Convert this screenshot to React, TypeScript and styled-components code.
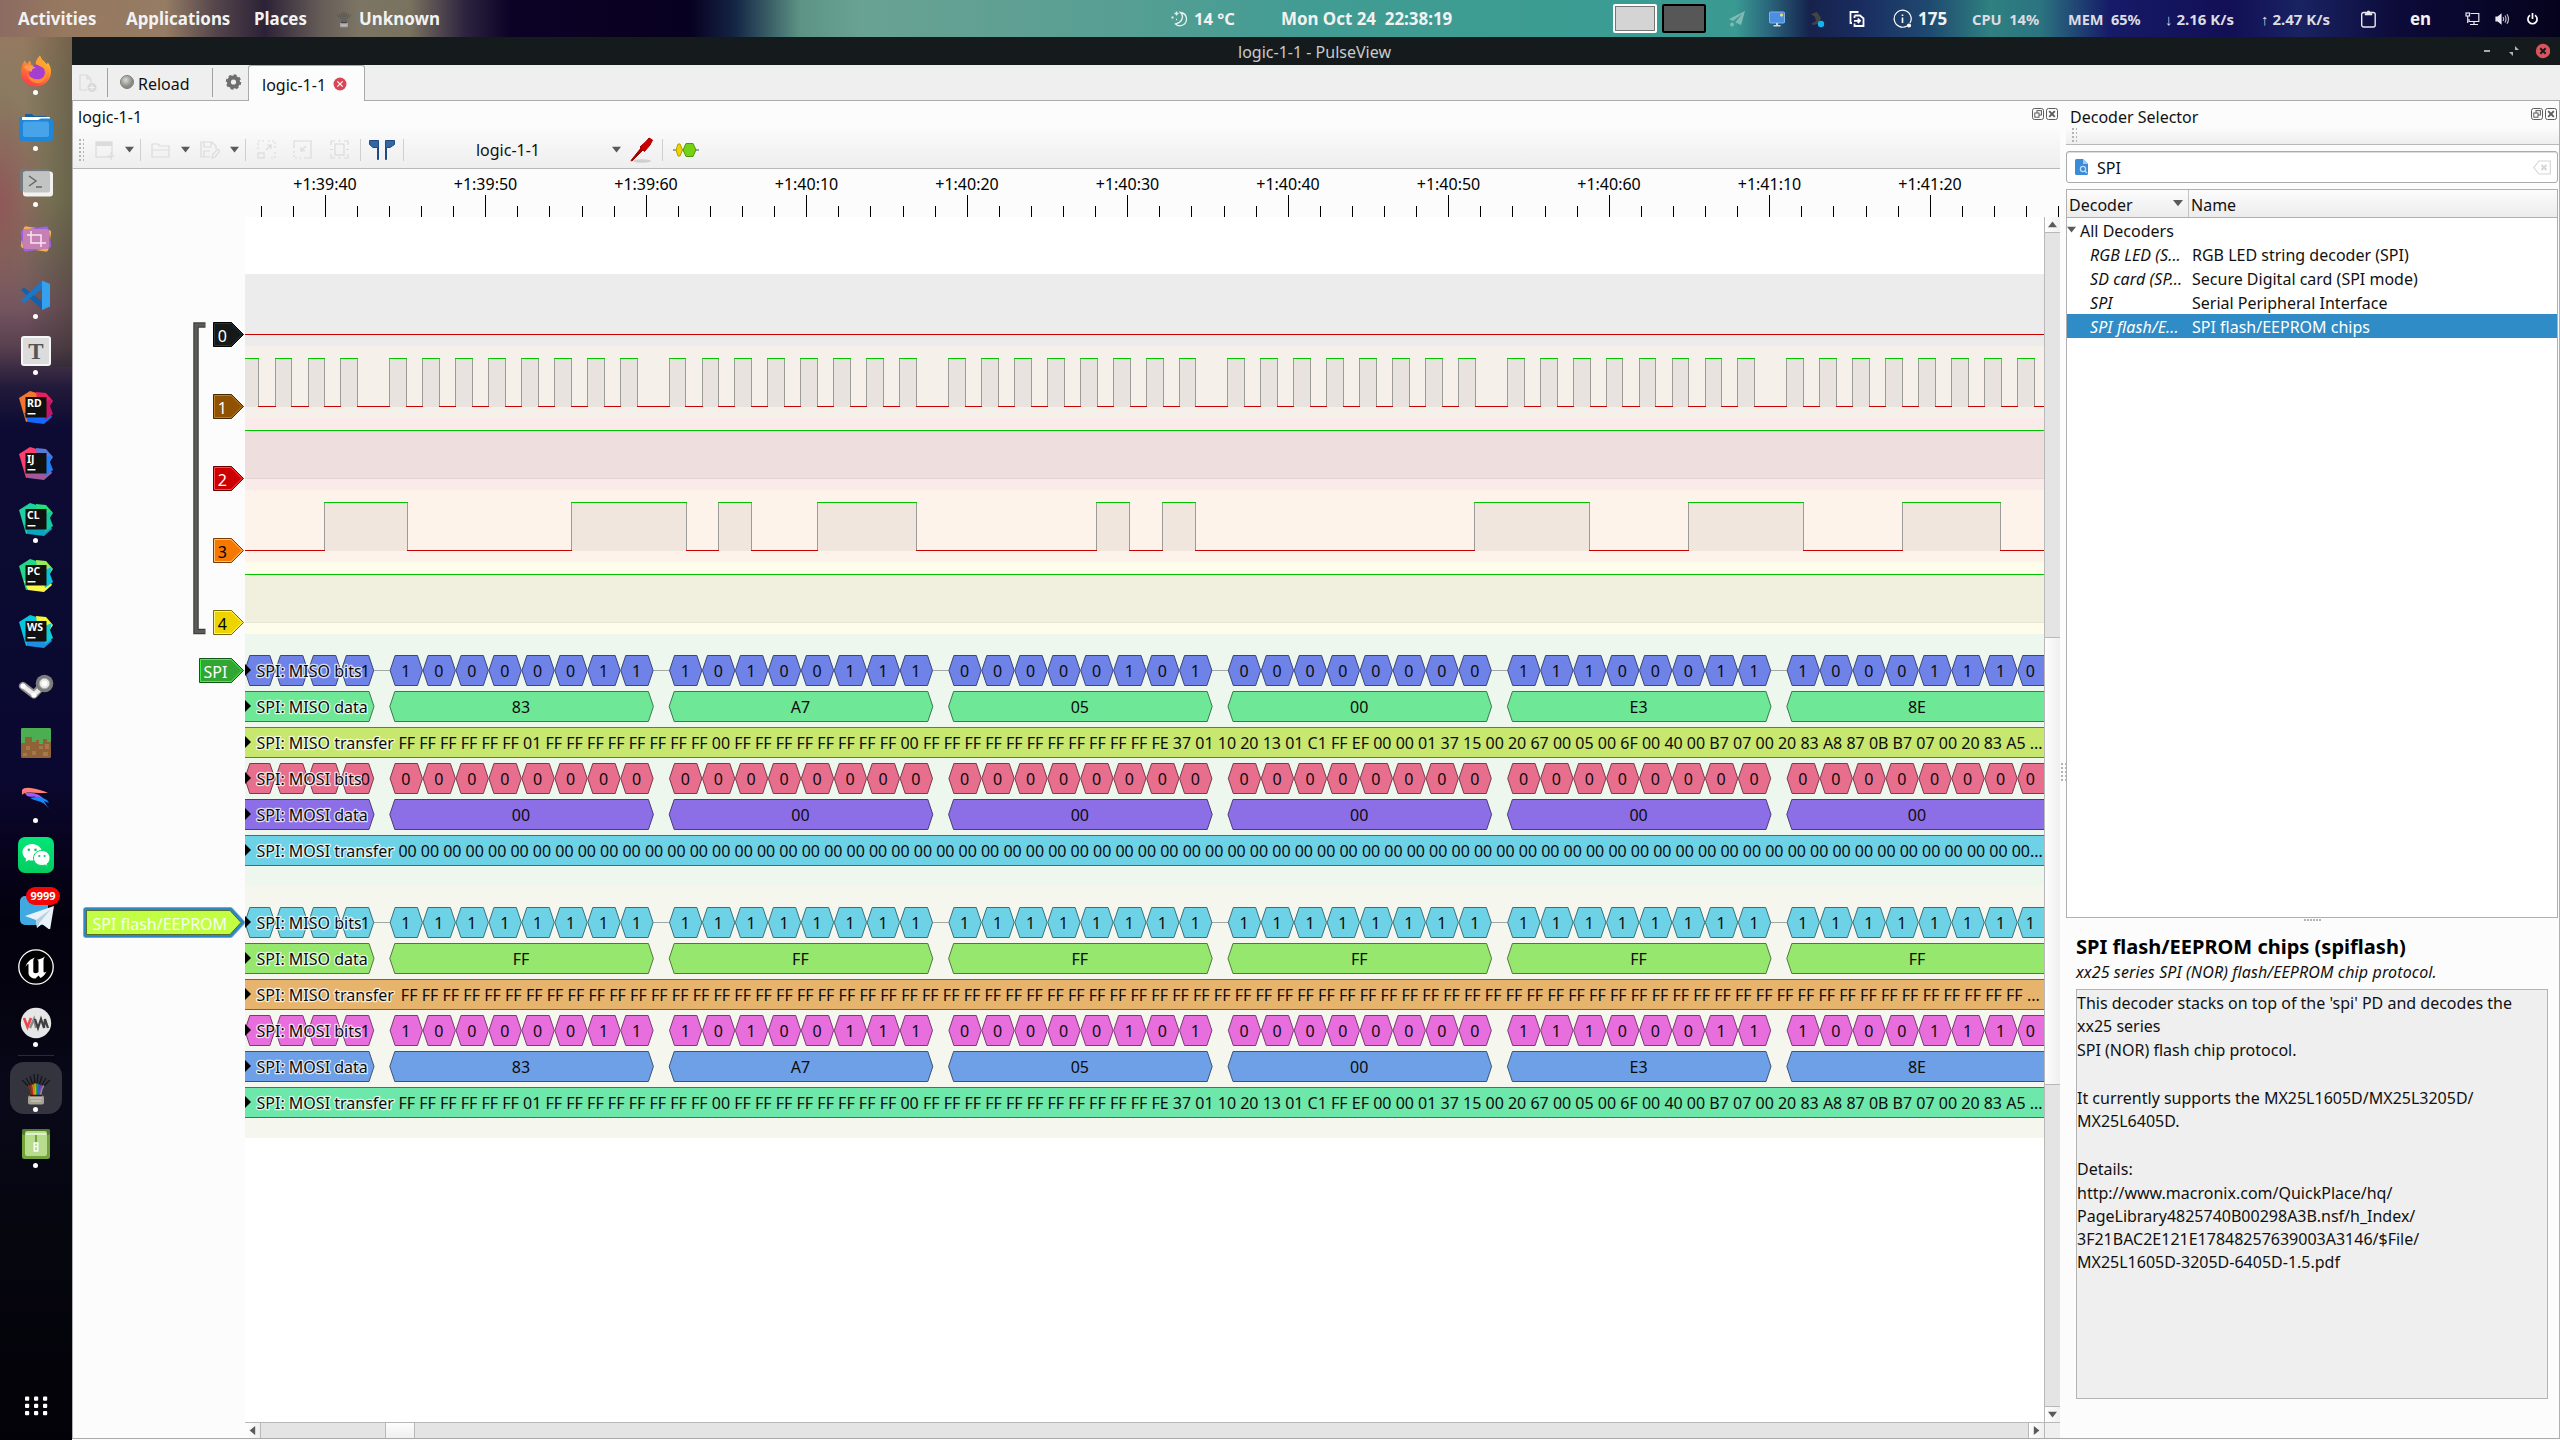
import React from "react";
import styled, { createGlobalStyle } from "styled-components";

const FONT = '"Noto Sans", "Open Sans", sans-serif';

const Global = createGlobalStyle`
  * { box-sizing: border-box; }
  body { margin: 0; background: #05031a; overflow: hidden; }
  #root { font-family: ${FONT}; font-size: 16px; color: #111; }
  svg { display: block; flex: none; }
`;

/* ---------- desktop shell ---------- */

const Desktop = styled.div`
  width: 2560px;
  height: 1440px;
  display: flex;
  flex-direction: column;
  overflow: hidden;
`;

const TopBar = styled.header`
  height: 37px;
  flex: none;
  display: flex;
  align-items: center;
  color: #f2f2f2;
  font-weight: 700;
  white-space: pre;
  background: linear-gradient(
    90deg,
    #8c6b62 0px, #96785f 60px, #957c64 165px, #55464c 215px, #2c2237 265px, #655c58 320px,
    #7d7564 360px, #79725f 410px, #2d2440 465px, #0c0226 510px, #080020 690px, #142545 735px,
    #5c9384 800px, #69a293 860px, #599f93 1100px, #429c93 1300px, #3a9c92 1600px, #3a9a92 1735px,
    #2c6c80 1765px, #16224c 1810px, #192c60 1860px, #1f4a70 1930px, #2f8080 1990px, #2b7480 2040px,
    #161a68 2110px, #120f55 2230px, #192362 2300px, #0c0a38 2400px, #05031c 2560px
  );
`;

const Cell = styled.div<{ $w: number; $ml?: number; $size?: number; $dim?: boolean; $gap?: number }>`
  width: ${(p) => p.$w}px;
  margin-left: ${(p) => p.$ml ?? 0}px;
  font-size: ${(p) => p.$size ?? 16.9}px;
  color: ${(p) => (p.$dim ? "#dcdce4" : "#f2f2f2")};
  gap: ${(p) => p.$gap ?? 0}px;
  flex: none;
  display: flex;
  align-items: center;
  height: 37px;
`;

const Workspace = styled.div<{ $active?: boolean }>`
  width: 44px;
  height: 29px;
  flex: none;
  border: 2px solid ${(p) => (p.$active ? "#fff" : "#000")};
  border-radius: 2px;
  background: ${(p) => (p.$active ? "#d4d4d4" : "#575757")};
  box-shadow: inset 0 0 0 1px ${(p) => (p.$active ? "#777" : "#575757")};
`;

const Body = styled.div`
  flex: 1;
  display: flex;
  min-height: 0;
`;

const Dock = styled.nav`
  width: 72px;
  flex: none;
  display: flex;
  flex-direction: column;
  align-items: center;
  padding-top: 6px;
  background:
    linear-gradient(90deg, rgba(0, 0, 0, 0) 35%, rgba(30, 40, 20, 0.28) 100%) 0 0 / 100% 330px no-repeat,
    radial-gradient(ellipse 50px 110px at 0 165px, rgba(146, 80, 88, 0.85), rgba(146, 80, 88, 0) 100%),
    linear-gradient(
      180deg,
      #94795f 0, #8a7b62 60px, #857c5e 160px, #7b6c5c 210px, #745560 270px, #58404e 310px,
      #221a3a 350px, #0d0b33 390px, #0b0a31 560px, #0a0830 740px, #080420 800px, #04010f 880px,
      #05030f 960px, #080819 1050px, #06060f 1200px, #030208 1403px
    );
`;

const DockItem = styled.div<{ $h?: number }>`
  position: relative;
  width: 52px;
  height: ${(p) => p.$h ?? 56}px;
  flex: none;
  display: flex;
  align-items: center;
  justify-content: center;
`;

const Dot = styled.span<{ $bottom?: number }>`
  position: absolute;
  left: 23px;
  bottom: ${(p) => p.$bottom ?? 4}px;
  width: 5px;
  height: 5px;
  border-radius: 2.5px;
  background: #fff;
`;

const Badge = styled.span`
  position: absolute;
  left: 16px;
  top: 4px;
  width: 34px;
  height: 18px;
  border-radius: 9px;
  background: #f60505;
  color: #fff;
  font-size: 11px;
  font-weight: 700;
  line-height: 18px;
  text-align: center;
`;

const DockRule = styled.div`
  width: 36px;
  height: 1px;
  margin: 4px 0 6px;
  background: #2a2a38;
`;

const ActiveTile = styled.div`
  position: relative;
  width: 52px;
  height: 52px;
  flex: none;
  border-radius: 14px;
  background: #34343f;
  display: flex;
  align-items: center;
  justify-content: center;
`;

const Spring = styled.div`
  flex: 1;
`;

/* ---------- application window ---------- */

const Window = styled.main`
  flex: 1;
  display: flex;
  flex-direction: column;
  background: #fcfcfc;
  min-width: 0;
`;

const TitleBar = styled.div`
  height: 28px;
  flex: none;
  background: #151b1d;
  color: #c9cbcb;
  display: grid;
  grid-template-columns: 1fr auto 1fr;
  align-items: center;
  padding-right: 10px;
`;

const TitleText = styled.span`
  padding: 2px 0 0 7px;
`;

const WinButtons = styled.div`
  display: flex;
  justify-content: flex-end;
`;

const TabStrip = styled.div`
  height: 36px;
  flex: none;
  background: #efefef;
  display: flex;
  box-shadow: inset 0 -1px 0 #ababab;
`;

const StripCell = styled.div<{ $w: number; $pl?: number; $sep?: boolean }>`
  width: ${(p) => p.$w}px;
  padding-left: ${(p) => p.$pl ?? 0}px;
  display: flex;
  align-items: center;
  height: 35px;
  flex: none;
  background: ${(p) =>
    p.$sep ? "linear-gradient(#a0a0a0, #a0a0a0) right 3px / 1px 29px no-repeat" : "none"};
`;

const StripLabel = styled.span`
  padding: 3px 0 0 4px;
`;

const Tab = styled.div`
  width: 117px;
  height: 36px;
  display: flex;
  align-items: center;
  justify-content: space-between;
  padding: 3px 17px 0 13px;
  white-space: nowrap;
  border: 1px solid #ababab;
  border-bottom: 0;
  border-radius: 3px 3px 0 0;
  background: #fcfcfc;
`;

const TabClose = styled.span`
  margin-top: -3px;
`;

const Panes = styled.div`
  flex: 1;
  display: flex;
  min-height: 0;
  border-left: 1px solid #b0b0b0;
  border-right: 1px solid #b0b0b0;
  border-bottom: 1px solid #ababab;
  margin-bottom: 1px;
`;

const TracePane = styled.section`
  width: 1987px;
  flex: none;
  display: flex;
  flex-direction: column;
`;

const PaneTitle = styled.div<{ $pl: number }>`
  height: 27px;
  flex: none;
  display: flex;
  align-items: center;
  justify-content: space-between;
  padding: 4px 2px 0 ${(p) => p.$pl}px;
`;

const PaneButtons = styled.div`
  display: flex;
  gap: 2px;
  margin-top: -5px;
`;

const Toolbar = styled.div<{ $h: number; $pt?: number }>`
  height: ${(p) => p.$h}px;
  flex: none;
  display: flex;
  align-items: center;
  padding: ${(p) => p.$pt ?? 0}px 0 0 6px;
  background: linear-gradient(#fbfbfb, #eeeeee);
  border-bottom: 1px solid #b8b8b8;
`;

const Grip = styled.div<{ $h: number }>`
  width: 5px;
  height: ${(p) => p.$h}px;
  flex: none;
  background-image: radial-gradient(circle at 1px 1px, #b4b4b4 0.8px, transparent 1px);
  background-size: 4px 4px;
`;

const Tool = styled.div<{ $w: number; $sep?: boolean; $start?: boolean }>`
  width: ${(p) => p.$w}px;
  height: 22px;
  flex: none;
  display: flex;
  align-items: center;
  justify-content: ${(p) => (p.$start ? "flex-start" : "center")};
  border-right: ${(p) => (p.$sep ? "1px solid #cfcfcf" : "0")};
`;

const ViewRow = styled.div`
  flex: 1;
  display: flex;
  min-height: 0;
`;

const ViewColumn = styled.div`
  width: 1971px;
  display: flex;
  flex-direction: column;
`;

const CanvasRow = styled.div`
  height: 1205px;
  display: flex;
`;

const HScroll = styled.div`
  height: 16px;
  margin-left: 172px;
  border-top: 1px solid #b8b8b8;
  display: flex;
  background: #e4e4e4;
`;

const VScroll = styled.div`
  width: 16px;
  flex: none;
  border-left: 1px solid #b8b8b8;
  display: flex;
  flex-direction: column;
  background: #e4e4e4;
`;

const ScrollButton = styled.div<{ $side: "top" | "bottom" | "left" | "right" }>`
  width: ${(p) => (p.$side === "left" || p.$side === "right" ? 16 : 15)}px;
  height: ${(p) => (p.$side === "left" || p.$side === "right" ? 15 : 16)}px;
  flex: none;
  background: linear-gradient(90deg, #fefefe, #f0f0f0);
  display: flex;
  align-items: center;
  justify-content: center;
  border-${(p) => ({ top: "bottom", bottom: "top", left: "right", right: "left" })[p.$side]}: 1px solid #b8b8b8;
`;

const VThumb = styled.div`
  height: 448px;
  margin-top: 404px;
  border: solid #b8b8b8;
  border-width: 1px 0;
  background: linear-gradient(90deg, #fdfdfd, #efefef);
`;

const HThumb = styled.div`
  width: 30px;
  margin-left: 124px;
  border: solid #b8b8b8;
  border-width: 0 1px;
  background: linear-gradient(#fdfdfd, #efefef);
`;

const Corner = styled.div`
  height: 16px;
  border-top: 1px solid #b8b8b8;
  background: #efefef;
`;

/* ---------- decoder selector ---------- */

const Splitter = styled.div`
  width: 6px;
  flex: none;
  display: flex;
  align-items: center;
  justify-content: center;
  padding-top: 4px;
`;

const SelectorPane = styled.section`
  width: 493px;
  flex: none;
  display: flex;
  flex-direction: column;
`;

const SearchBox = styled.div`
  margin: 6px 1px 6px 0;
  height: 32px;
  flex: none;
  border: 1px solid #aaa;
  border-radius: 3px;
  background: #fff;
  display: flex;
  align-items: center;
  padding: 0 6px 0 8px;
  box-shadow: inset 0 1px 0 #dcdcdc;
`;

const SearchText = styled.span`
  flex: 1;
  padding: 2px 0 0 8px;
`;

const Tree = styled.div`
  margin-right: 1px;
  height: 729px;
  flex: none;
  border: 1px solid #b0b0b0;
  background: #fff;
  display: flex;
  flex-direction: column;
`;

const TreeHead = styled.div`
  height: 28px;
  flex: none;
  display: flex;
  background: linear-gradient(#fcfcfc, #ececec);
  border-bottom: 1px solid #b0b0b0;
`;

const HeadCell = styled.div<{ $w?: number }>`
  width: ${(p) => (p.$w ? `${p.$w}px` : "auto")};
  padding: 3px 5px 0 2px;
  display: flex;
  justify-content: space-between;
  align-items: center;
  border-right: ${(p) => (p.$w ? "1px solid #c4c4c4" : "0")};
`;

const SortMark = styled.span`
  margin-top: -5px;
`;

const TreeRow = styled.div<{ $selected?: boolean }>`
  height: 24px;
  flex: none;
  display: flex;
  align-items: center;
  padding-top: 2px;
  background: ${(p) => (p.$selected ? "#308cc6" : "transparent")};
  color: ${(p) => (p.$selected ? "#fff" : "#111")};
`;

const DecoderId = styled.span`
  width: 125px;
  padding-left: 23px;
  font-style: italic;
  letter-spacing: 0.1px;
  flex: none;
`;

const Twisty = styled.span`
  width: 13px;
  flex: none;
  margin-top: -4px;
`;

const DotRow = styled.div`
  height: 5px;
  width: 18px;
  align-self: center;
  background-image: radial-gradient(circle at 1px 2px, #b4b4b4 0.8px, transparent 1px);
  background-size: 3px 5px;
`;

const Details = styled.div`
  padding: 10px 11px 0 10px;
  display: flex;
  flex-direction: column;
`;

const Heading = styled.h1`
  margin: 0;
  font-size: 20px;
  line-height: 28px;
  font-weight: 700;
  color: #000;
`;

const Summary = styled.div`
  font-style: italic;
  line-height: 24px;
  letter-spacing: 0.12px;
  margin-top: -1px;
`;

const DocBox = styled.div`
  margin-top: 5px;
  height: 410px;
  border: 1px solid #b4b4b4;
  background: #efefef;
  padding-top: 2px;
`;

const Para = styled.p`
  margin: 0 0 1px;
  min-height: 23px;
  line-height: 23px;
  white-space: pre;
`;

/* ---------- trace geometry ---------- */

const VIEW_X = 245;
const VIEW_Y = 217;
const VIEW_W = 1799;
const VIEW_H = 1205;
const BYTE0 = 110.4;
const BYTE_STEP = 279.4;
const BIT = 32.95;

const MISO = [0x01, 0x83, 0xa7, 0x05, 0x00, 0xe3, 0x8e];
const hex2 = (n: number) => n.toString(16).toUpperCase().padStart(2, "0");
const bitsOf = (n: number) => n.toString(2).padStart(8, "0").split("");
const byteX = (i: number) => BYTE0 + i * BYTE_STEP;

const bands = [
  { y: 274, h: 72, fill: "#ececec" },
  { y: 346, h: 72, fill: "#f5f0ea" },
  { y: 418, h: 72, fill: "#fbeaea" },
  { y: 490, h: 72, fill: "#fef3ea" },
  { y: 562, h: 72, fill: "#fefcea" },
  { y: 634, h: 252, fill: "#edf7ee" },
  { y: 886, h: 252, fill: "#f5f7ee" },
];

const clockPulses: [number, number][] = [];
for (let b = 0; b < 7; b++)
  for (let i = 0; i < 8; i++) {
    const s = byteX(b) + i * BIT;
    if (s + 17 > VIEW_X) clockPulses.push([s, s + 16.8]);
  }

const dataPulses: [number, number][] = [
  [324.9, 407.3],
  [571.3, 686.1],
  [719, 752],
  [817.5, 916.3],
  [1096.9, 1130],
  [1162.8, 1195.7],
  [1475, 1589.8],
  [1688.6, 1803.8],
  [1902.1, 2001],
];

function Pulses({ list, high, low }: { list: [number, number][]; high: number; low: number }) {
  let x = VIEW_X;
  return (
    <g shapeRendering="crispEdges">
      {list.map(([rawA, rawB], i) => {
        const a = Math.max(Math.round(rawA - 0.6), VIEW_X - 2);
        const b = Math.round(rawB - 0.6);
        const from = x;
        x = b;
        return (
          <g key={i}>
            {a > from && <rect x={from} y={low} width={a - from + 1} height={1} fill="#c80000" />}
            <rect x={a} y={high} width={b - a} height={low - high + 1} fill="#000" fillOpacity={0.05} />
            <rect x={a} y={high} width={1} height={low - high} fill="#9b9b98" />
            <rect x={b} y={high} width={1} height={low - high} fill="#9b9b98" />
            <rect x={a} y={high} width={b - a + 1} height={1} fill="#00c400" />
          </g>
        );
      })}
      <rect x={x} y={low} width={VIEW_X + VIEW_W - x} height={1} fill="#c80000" />
    </g>
  );
}

function Steady({ high, low }: { high: number; low: number }) {
  return (
    <g shapeRendering="crispEdges">
      <rect x={VIEW_X} y={high} width={VIEW_W} height={low - high + 1} fill="#000" fillOpacity={0.05} />
      <rect x={VIEW_X} y={low} width={VIEW_W} height={1} fill="#000" fillOpacity={0.04} />
      <rect x={VIEW_X} y={high} width={VIEW_W} height={1} fill="#00c400" />
    </g>
  );
}

const hexPath = (a: number, b: number, y: number) =>
  `M${a} ${y}L${a + 5} ${y - 15}H${b - 5}L${b} ${y}L${b - 5} ${y + 15}H${a + 5}Z`;

type RowKind = "bits" | "data" | "transfer";
interface AnnRow {
  y: number;
  kind: RowKind;
  label: string;
  fill: string;
  stroke: string;
  bytes?: number[];
  text?: string;
  textX?: number;
  textW?: number;
  link?: boolean;
}

const rep = (s: string, n: number) => Array(n).fill(s).join(" ");
const transferText =
  `${rep("FF", 6)} 01 ${rep("FF", 8)} 00 ${rep("FF", 8)} 00 ${rep("FF", 11)} ` +
  "FE 37 01 10 20 13 01 C1 FF EF 00 00 01 37 15 00 20 67 00 05 00 6F 00 40 00 B7 07 00 20 83 A8 87 0B B7 07 00 20 83 A5 ...";
const zeros = MISO.map(() => 0);
const ones = MISO.map(() => 0xff);

const rows: AnnRow[] = [
  { y: 670.5, kind: "bits", label: "SPI: MISO bits", fill: "#6e82e7", stroke: "#3b467a", bytes: MISO, link: true },
  { y: 706.5, kind: "data", label: "SPI: MISO data", fill: "#6ee796", stroke: "#3b7a50", bytes: MISO },
  { y: 742.5, kind: "transfer", label: "SPI: MISO transfer", fill: "#c8e76e", stroke: "#6a7a3b", text: transferText, textX: 398.4, textW: 1644.2 },
  { y: 778.5, kind: "bits", label: "SPI: MOSI bits", fill: "#e76e8c", stroke: "#7a3b4b", bytes: zeros },
  { y: 814.5, kind: "data", label: "SPI: MOSI data", fill: "#8c6ee7", stroke: "#4b3b7a", bytes: zeros },
  { y: 850.5, kind: "transfer", label: "SPI: MOSI transfer", fill: "#6ed2e7", stroke: "#3b6f7a", text: `${rep("00", 73)}...`, textX: 398.4, textW: 1644.4 },
  { y: 922.5, kind: "bits", label: "SPI: MISO bits", fill: "#6ed2e7", stroke: "#3b6f7a", bytes: ones, link: true },
  { y: 958.5, kind: "data", label: "SPI: MISO data", fill: "#96e76e", stroke: "#507a3b", bytes: ones },
  { y: 994.5, kind: "transfer", label: "SPI: MISO transfer", fill: "#e7b46e", stroke: "#7a603b", text: `${rep("FF", 78)} ...`, textX: 400.8, textW: 1639 },
  { y: 1030.5, kind: "bits", label: "SPI: MOSI bits", fill: "#e76edc", stroke: "#7a3b74", bytes: MISO },
  { y: 1066.5, kind: "data", label: "SPI: MOSI data", fill: "#6ea0e7", stroke: "#3b557a", bytes: MISO },
  { y: 1102.5, kind: "transfer", label: "SPI: MOSI transfer", fill: "#6ee7aa", stroke: "#3b7a5b", text: transferText, textX: 398.4, textW: 1644.2 },
];

const RIGHT = VIEW_X + VIEW_W;

function AnnotationRow({ row }: { row: AnnRow }) {
  const { y, fill, stroke } = row;
  return (
    <g>
      {row.link &&
        MISO.slice(1).map((_, i) => (
          <path key={i} d={`M${byteX(i) + 8 * BIT} ${y}H${byteX(i + 1)}`} stroke="#a4a8a4" />
        ))}
      {row.kind === "transfer" && (
        <>
          <rect x={VIEW_X - 5} y={y - 15} width={VIEW_W + 10} height={30} fill={fill} stroke={stroke} />
          <text x={row.textX} y={y + 6.5} textLength={row.textW}>{row.text}</text>
        </>
      )}
      {row.kind === "data" &&
        row.bytes!.map((b, i) => {
          const a = i === 0 ? VIEW_X - 12 : byteX(i);
          const e = byteX(i) + 8 * BIT;
          const vis = e > RIGHT ? 1917 : (a + e) / 2 - 0.6;
          return (
            <g key={i}>
              <path d={hexPath(a, e, y)} fill={fill} stroke={stroke} />
              {i > 0 && <text x={vis} y={y + 6.5} textAnchor="middle">{hex2(b)}</text>}
            </g>
          );
        })}
      {row.kind === "bits" &&
        row.bytes!.map((b, i) =>
          bitsOf(b).map((bit, k) => {
            if (i === 0 && k < 4) return null;
            const a = Math.max(byteX(i) + k * BIT, VIEW_X - 0.5);
            const e = byteX(i) + (k + 1) * BIT;
            const shown = i > 0 || k === 7;
            const cx = i === 0 ? 365.3 : (a + Math.min(e, RIGHT)) / 2 - 0.4;
            return (
              <g key={`${i}-${k}`}>
                <path d={hexPath(a + 0.3, e - 0.3, y)} fill={fill} stroke={stroke} />
                {shown && <text x={cx} y={y + 6.5} textAnchor="middle">{bit}</text>}
              </g>
            );
          }),
        )}
      <path d={`M245 ${y - 6.5}L251 ${y - 0.5}L245 ${y + 5.5}Z`} fill="#000" />
      <text x={256.5} y={y + 6.5} stroke="#fff" strokeOpacity={0.75} strokeWidth={2.6} strokeLinejoin="round" paintOrder="stroke">
        {row.label}
      </text>
    </g>
  );
}

function TraceView() {
  return (
    <svg width={VIEW_W} height={VIEW_H} viewBox={`${VIEW_X} ${VIEW_Y} ${VIEW_W} ${VIEW_H}`} fontFamily={FONT} fontSize={16} fill="#0c0c0c">
      <rect x={VIEW_X} y={VIEW_Y} width={VIEW_W} height={VIEW_H} fill="#fff" />
      {bands.map((b) => (
        <rect key={b.y} x={VIEW_X} y={b.y} width={VIEW_W} height={b.h} fill={b.fill} />
      ))}
      <rect x={VIEW_X} y={334} width={VIEW_W} height={1} fill="#c80000" />
      <Pulses list={clockPulses} high={358} low={406} />
      <Steady high={430} low={478} />
      <Pulses list={dataPulses} high={502} low={550} />
      <Steady high={574} low={622} />
      {rows.map((r) => (
        <AnnotationRow key={r.y} row={r} />
      ))}
    </svg>
  );
}

const channels = [
  { n: "0", y: 334.5, fill: "#16191a", edge: "#000", inner: "#2e3436", ink: "#fff" },
  { n: "1", y: 406.5, fill: "#8f5202", edge: "#472901", inner: "#c47a1e", ink: "#fff" },
  { n: "2", y: 478.5, fill: "#cc0000", edge: "#660000", inner: "#ff4a4a", ink: "#fff" },
  { n: "3", y: 550.5, fill: "#f57900", edge: "#7a3c00", inner: "#ffbd7a", ink: "#000" },
  { n: "4", y: 622.5, fill: "#edd400", edge: "#766a00", inner: "#fff27a", ink: "#000" },
];

const tagPath = (x: number, y: number, inset = 0) =>
  `M${x + inset} ${y - 12 + inset}H${231.5 - inset * 0.4}L${243.5 - inset * 1.5} ${y}L${231.5 - inset * 0.4} ${y + 12 - inset}H${x + inset}Z`;

function ChannelHeader() {
  return (
    <svg width={172} height={VIEW_H} viewBox={`73 ${VIEW_Y} 172 ${VIEW_H}`} fontFamily={FONT} fontSize={16}>
      <path d="M205.5 325H196V631.5H205.5" fill="none" stroke="#3f403e" strokeWidth={5.5} />
      <path d="M205 325H196V631.5H205" fill="none" stroke="#5a5c58" strokeWidth={3} />
      {channels.map((c) => (
        <g key={c.n}>
          <path d={tagPath(213.5, c.y)} fill={c.fill} stroke={c.edge} />
          <path d={tagPath(213.5, c.y, 1)} fill="none" stroke={c.inner} />
          <text x={222.3} y={c.y + 7} textAnchor="middle" fill={c.ink}>{c.n}</text>
        </g>
      ))}
      <path d={tagPath(199.5, 670.5)} fill="#32a632" stroke="#0e5a14" />
      <path d={tagPath(199.5, 670.5, 1)} fill="none" stroke="#44f04a" />
      <text x={203.5} y={677.5} fill="#fff">SPI</text>
      <path d="M86 910H230.5L242 922.5L230.5 935H86Z" fill="none" stroke="#7fb4dc" strokeWidth={6} strokeLinejoin="round" />
      <path d="M86 910H230.5L242 922.5L230.5 935H86Z" fill="#c2ff44" stroke="#2f86c4" strokeWidth={4.4} strokeLinejoin="round" />
      <path d="M86.5 910.5H230L241 922.5L230 934.5H86.5Z" fill="#c2ff44" stroke="#55702a" />
      <text x={92.5} y={929.5} fill="#fff" fillOpacity={0.92}>SPI flash/EEPROM</text>
    </svg>
  );
}

const rulerLabels = ["39:40", "39:50", "39:60", "40:10", "40:20", "40:30", "40:40", "40:50", "40:60", "41:10", "41:20"];

function Ruler() {
  const ticks = Array.from({ length: 57 }, (_, i) => i - 2);
  return (
    <svg width={1987} height={48} viewBox="73 169 1987 48" fontFamily={FONT} fontSize={16}>
      {ticks.map((i) => {
        const x = Math.round(325.2 + i * 32.1 - 0.5);
        const major = i % 5 === 0;
        return <rect key={i} x={x} y={major ? 195 : 206} width={1} height={major ? 22 : 11} fill="#000" />;
      })}
      {rulerLabels.map((l, i) => (
        <text key={l} x={325 + i * 160.5} y={190} textAnchor="middle" fill="#000">{`+1:${l}`}</text>
      ))}
    </svg>
  );
}

/* ---------- small drawings ---------- */

const Arrow = ({ dir = "down", size = 9 }: { dir?: "down" | "up" | "left" | "right"; size?: number }) => {
  const rot = { down: 0, up: 180, left: 90, right: -90 }[dir];
  return (
    <svg width={size} height={size} viewBox="0 0 10 10">
      <path d="M0 2H10L5 8.200Z" fill="#5a5a5a" transform={`rotate(${rot} 5 5)`} />
    </svg>
  );
};

const FloatIcon = () => (
  <svg width="12" height="12" viewBox="0 0 12 12" fill="none" stroke="#5c5c5c">
    <rect x="0.5" y="0.5" width="11" height="11" rx="2" />
    <rect x="5" y="2.6" width="4.4" height="4.4" />
    <rect x="2.8" y="5" width="4.2" height="4.2" fill="#fcfcfc" />
  </svg>
);
const CloseIcon = () => (
  <svg width="12" height="12" viewBox="0 0 12 12" fill="none" stroke="#5c5c5c">
    <rect x="0.5" y="0.5" width="11" height="11" rx="2" />
    <path d="M3.2 3.2L8.8 8.8M8.8 3.2L3.2 8.8" strokeWidth="1.9" />
  </svg>
);

const Faint = ({ children, w = 20 }: { children: React.ReactNode; w?: number }) => (
  <svg width={w} height="20" viewBox="0 0 20 20" fill="none" stroke="#dbdbdb" strokeWidth="1.2">{children}</svg>
);

/* ---------- dock icons ---------- */

const I = ({ children, s = 36 }: { children: React.ReactNode; s?: number }) => (
  <svg width={s} height={s} viewBox="0 0 36 36">{children}</svg>
);

const Firefox = () => (
  <I>
    <defs>
      <linearGradient id="ffx" x1="0.8" y1="0" x2="0.3" y2="1">
        <stop offset="0" stopColor="#ffd43a" /><stop offset="0.45" stopColor="#ff8a2a" /><stop offset="1" stopColor="#ff3750" />
      </linearGradient>
    </defs>
    <path d="M3 20C3 13 5 11 6.500 7.500L9 11L12 7.500L13.500 12H18C17 8 20 5 22 2.500C23 7 27 8 28.500 11.500L30 9.500C32 13 33.500 16 33 20C32 28 26 33.500 18 33.500C10 33.500 3.500 28 3 20Z" fill="url(#ffx)" />
    <circle cx="19" cy="19.500" r="8" fill="#a53fd0" />
    <path d="M6 14C9 11 14 12 18 15C15 15 13.500 16.500 14 18.500C11 19 8 17 6 14Z" fill="#ff9a52" />
    <path d="M9 21C12 25 17 27 22 26C26 25 28 21 27.500 16C30 20 29 27 23 29.500C17 31.500 11 28 9 21Z" fill="#ff8b30" />
    <path d="M22 2.500C23 7 28.500 10 28.500 18C26 14 20 13 19 11C18 8 20 5 22 2.500Z" fill="#ffa22c" />
  </I>
);
const Files = () => (
  <I>
    <path d="M7 5H14L16 7H28V14H7Z" fill="#1a5f9e" />
    <rect x="4" y="8" width="28" height="8" rx="1" fill="#fff" />
    <path d="M1 10Q1 7.500 3 8H4V11H20L23 9.500H33Q35 9.500 35 12V29Q35 32 32 32H4Q1 32 1 29Z" fill="#1f86d8" />
    <rect x="5" y="12.500" width="26" height="15.500" rx="2" fill="#47a3ea" />
  </I>
);
const Terminal = () => (
  <I>
    <rect x="2" y="4" width="30" height="23" rx="3" fill="#727a80" />
    <rect x="5" y="6.500" width="30" height="25" rx="3" fill="#f2f2f0" />
    <rect x="5" y="6.500" width="27" height="21" rx="2" fill="#c2c4c4" />
    <path d="M11 11L18 16L11 21M18 22H24" stroke="#666" strokeWidth="1.500" fill="none" />
  </I>
);
const Crop = () => (
  <I>
    <rect x="4" y="7" width="28" height="22" rx="3" fill="#f3ae52" transform="rotate(9 18 18)" />
    <rect x="4" y="7" width="28" height="22" rx="3" fill="#9a63e6" transform="rotate(-9 18 18)" />
    <rect x="5" y="8" width="26" height="20" rx="3" fill="#c780b4" />
    <path d="M13 10V22H28M9 14H23V26" stroke="#f5e6f5" strokeWidth="1.500" fill="none" />
  </I>
);
const VsCode = () => (
  <I>
    <path d="M3 13L6 10.500L26 26V32L24 32.500Z" fill="#1560a8" />
    <path d="M3 23.500L24 4L26 10L6 26Z" fill="#1b78c8" />
    <path d="M24 3.500L32 7V29.500L24 33V3.500Z" fill="#35a0ee" />
  </I>
);
const Typora = () => (
  <I>
    <rect x="3" y="3" width="30" height="30" rx="3" fill="#f6f6f6" />
    <rect x="5" y="5" width="26" height="26" rx="1" fill="#dcdcdc" />
    <text x="18" y="26" fontSize="23" fontWeight="700" fontFamily='"Liberation Serif", serif' textAnchor="middle" fill="#555">T</text>
  </I>
);

const JB_SHAPES = [
  "M1 9L12 2L22 5L18 30L8 33Z",
  "M18 3L28 4L35 12L31 18L20 17Z",
  "M6 24L30 20L34 28L26 35L10 33Z",
  "M24 14L34 10L32 17L35 25L27 31Z",
];
const JetBrains = ({ code, colors }: { code: string; colors: string[] }) => (
  <I>
    {JB_SHAPES.map((d, i) => (
      <path key={d} d={d} fill={colors[i]} />
    ))}
    <rect x="7.500" y="8" width="21" height="20.500" fill="#101010" />
    <text x="9" y="17.500" fontSize="10.500" fontWeight="700" fontFamily={FONT} fill="#fff">{code}</text>
    <rect x="9.500" y="24" width="8" height="1.500" fill="#fff" />
  </I>
);
const Steam = () => (
  <I>
    <path d="M5 17L16 25.500L26 15" stroke="#8e8e8e" strokeWidth="8" fill="none" strokeLinecap="round" strokeLinejoin="round" />
    <path d="M5 17L16 25.500L21 21" stroke="#ececec" strokeWidth="4.500" fill="none" strokeLinecap="round" strokeLinejoin="round" />
    <circle cx="26.500" cy="14.500" r="8.800" fill="#7c7c7c" />
    <circle cx="26.500" cy="14.500" r="5.200" fill="#e6e6e6" stroke="#a8a8a8" />
    <circle cx="26.500" cy="14.500" r="2.800" fill="#fff" />
    <circle cx="5" cy="17" r="2.600" fill="#fff" />
    <circle cx="16" cy="26" r="2.600" fill="#fff" />
  </I>
);
const Grass = () => (
  <I>
    <rect x="3" y="3" width="30" height="30" rx="1.500" fill="#8f6238" />
    <path d="M3 18H7V12H14V17H18V15H21V19H25V14H29V17H33V4.500Q33 3 31.500 3H4.500Q3 3 3 4.500Z" fill="#4cae50" />
    <path d="M8 21H12V25H8ZM21 21H25V24H21ZM27 19H31V24H27ZM14 26H18V30H14ZM25 27H30V31H25ZM5 28H9V31H5Z" fill="#a6794b" />
  </I>
);
const Swallow = () => (
  <I>
    <path d="M4 9Q6 6 13 7Q24 9 30 12Q20 12 12 11.500Q6 11 4 14Z" fill="#ff7f78" />
    <path d="M7 12Q20 10 28 20Q22 16 16 15.500Q9 17 7 12Z" fill="#a05cf8" />
    <path d="M12 17Q22 14 29 19L31 22L26 20L31 28Q26 21 20 20Q15 19 12 17Z" fill="#1a86f6" />
  </I>
);
const WeChat = () => (
  <I>
    <defs><linearGradient id="wx" x1="0" y1="0" x2="0" y2="1"><stop offset="0" stopColor="#03e678" /><stop offset="1" stopColor="#04cc60" /></linearGradient></defs>
    <rect width="36" height="36" rx="7" fill="url(#wx)" />
    <path d="M14 7C8.500 7 4.500 10.800 4.500 15.300C4.500 18 6 20.300 8.200 21.800L7.500 24.800L10.800 23C12 23.400 13 23.500 14 23.500C19.500 23.500 24 20 24 15.300C24 10.800 19.500 7 14 7Z" fill="#fff" />
    <path d="M24 13.500C19 13.500 15.500 17 15.500 21C15.500 25.200 19 28.500 24 28.500C25 28.500 26 28.400 27 28L29.500 29.500L29 27C31 25.500 32 23.400 32 21C32 17 28.500 13.500 24 13.500Z" fill="#fff" stroke="#04d568" />
    <circle cx="10.800" cy="12.800" r="1.300" fill="#04c965" /><circle cx="17.500" cy="12.800" r="1.300" fill="#04c965" />
    <circle cx="21.300" cy="19" r="1.100" fill="#04c965" /><circle cx="26.600" cy="19" r="1.100" fill="#04c965" />
  </I>
);
const Telegram = () => (
  <I>
    <rect x="2" y="3" width="28" height="29" rx="5" fill="#41a9e2" />
    <path d="M7 23L36 13L32 37L24 31L19 35L18 27Z" fill="#e9f2f8" />
    <path d="M18 27L33 16L22 29L19 35Z" fill="#b7cfdf" />
  </I>
);
const Unreal = () => (
  <I>
    <circle cx="18" cy="18" r="17.200" fill="#000" stroke="#fff" strokeWidth="1.300" />
    <path d="M7.500 18C9 13 12.500 10 17 8.500C15.500 9.800 15.300 11 15.300 12.500V22.500C15.300 24.500 18.500 24.800 20.500 23V13C20.500 11.500 19.800 11 19 10.800C22 10.500 25 9 27 7.500C26 9 25.500 10 25.500 12V22.500C25.500 23.500 26.500 24 28.500 22.500C27 26 24.500 28 22.500 29L20.500 26.500L17.500 29.500C14 29.500 10.500 27.500 10.500 24V15.500C10.500 14.500 9 15.500 7.500 18Z" fill="#fff" />
  </I>
);
const Via = () => (
  <I>
    <circle cx="18" cy="18" r="15.200" fill="#e6e6e6" />
    <path d="M6 13L9.500 22L13 13" stroke="#e5494f" strokeWidth="2.600" fill="none" />
    <path d="M12 23L16 14L18 23" stroke="#8b8b8b" strokeWidth="2.400" fill="none" />
    <path d="M17 14L20 23L23 14L26 23L27 14L30 23" stroke="#3f3f42" strokeWidth="2.200" fill="none" />
  </I>
);
const wires = ["#6b3a12", "#c62020", "#e87817", "#d9b800", "#35a535", "#2468d8", "#8b36c8", "#8d8d8d"];
const Wires = ({ s = 36, mono = false }: { s?: number; mono?: boolean }) => (
  <I s={s}>
    {wires.map((c, i) => {
      const t = i - 3.5;
      return (
        <g key={c} fill="none">
          <path d={`M${18 + t * 1.3} 26Q${18 + t * 1.6} 17 ${18 + t * 2.3} ${13 + Math.abs(t) * 0.8}`} stroke={mono ? "#606060" : c} strokeWidth="1.700" />
          <path d={`M${18 + t * 2.3} ${13 + Math.abs(t) * 0.8}L${18 + t * 4} ${3 + Math.abs(t) * 2}`} stroke={mono ? "#4c4c4c" : "#15151a"} strokeWidth="1.300" />
        </g>
      );
    })}
    <rect x="10" y="25.500" width="16" height="9" rx="2" fill={mono ? "#a5a5a5" : "#a8a292"} />
    <path d="M12 28H24M13 31H23" stroke="#d6d2c4" strokeWidth="1" />
    <path d="M12 25.500H24" stroke="#222" strokeWidth="1.500" />
  </I>
);
const Archive = () => (
  <I>
    <rect x="4" y="3" width="28" height="30" rx="2.500" fill="#74a23c" />
    <rect x="4" y="3" width="28" height="6" rx="2" fill="#507a30" />
    <rect x="7" y="5" width="22" height="25" rx="2" fill="#b6dc8c" />
    <path d="M8 8H28" stroke="#eef6e4" strokeWidth="1.500" />
    <rect x="17" y="9" width="2" height="8" fill="#74a23c" />
    <path d="M16.200 17H19.800V20.500H16.200ZM16.200 20.500H19.800V25H16.200Z" stroke="#fff" strokeWidth="1.300" fill="none" />
  </I>
);

const dockItems: { icon: React.ReactNode; dot?: boolean; badge?: string }[] = [
  { icon: <Firefox />, dot: true },
  { icon: <Files />, dot: true },
  { icon: <Terminal />, dot: true },
  { icon: <Crop /> },
  { icon: <VsCode />, dot: true },
  { icon: <Typora />, dot: true },
  { icon: <JetBrains code="RD" colors={["#f2762e", "#e8215e", "#1468ff", "#c21765"]} /> },
  { icon: <JetBrains code="IJ" colors={["#fc3f6e", "#5a78d8", "#a05a9c", "#1f80f5"]} /> },
  { icon: <JetBrains code="CL" colors={["#1fd0a0", "#24e07c", "#0ca5c0", "#17c9a0"]} />, dot: true },
  { icon: <JetBrains code="PC" colors={["#25d789", "#9be85a", "#fcf84a", "#0cc0da"]} /> },
  { icon: <JetBrains code="WS" colors={["#06c5de", "#f4f53c", "#1e8fe0", "#10ccd6"]} /> },
  { icon: <Steam /> },
  { icon: <Grass /> },
  { icon: <Swallow />, dot: true },
  { icon: <WeChat /> },
  { icon: <Telegram />, badge: "9999" },
  { icon: <Unreal /> },
  { icon: <Via />, dot: true },
];

const decoders = [
  ["RGB LED (S...", "RGB LED string decoder (SPI)"],
  ["SD card (SP...", "Secure Digital card (SPI mode)"],
  ["SPI", "Serial Peripheral Interface"],
  ["SPI flash/E...", "SPI flash/EEPROM chips"],
];

const doc = [
  "This decoder stacks on top of the 'spi' PD and decodes the\nxx25 series",
  "SPI (NOR) flash chip protocol.",
  "",
  "It currently supports the MX25L1605D/MX25L3205D/\nMX25L6405D.",
  "",
  "Details:",
  "http://www.macronix.com/QuickPlace/hq/\nPageLibrary4825740B00298A3B.nsf/h_Index/\n3F21BAC2E121E17848257639003A3146/$File/\nMX25L1605D-3205D-6405D-1.5.pdf",
];

function PanelBar() {
  return (
    <TopBar>
      <Cell $w={90} $ml={18}>Activities</Cell>
      <Cell $w={110} $ml={18}>Applications</Cell>
      <Cell $w={60} $ml={18}>Places</Cell>
      <Cell $w={20} $ml={21}><Wires s={18} mono /></Cell>
      <Cell $w={90} $ml={4}>Unknown</Cell>
      <Cell $w={20} $ml={721}>
        <svg width="18" height="18" viewBox="0 0 18 18" fill="none" stroke="#e8f2f0" strokeWidth="1.300">
          <path d="M10.500 2.500C14 6 13 12 5.500 14C9 17.500 16.500 15.500 16.500 9C16.500 5 13.500 3 10.500 2.500Z" />
          <path d="M6.500 1.500V5.500M4.500 3.500H8.500M1.500 7.500H3.500M2.500 6.500V8.500M6 9.500H7" />
        </svg>
      </Cell>
      <Cell $w={60} $ml={4} $size={16.5}>14 °C</Cell>
      <Cell $w={200} $ml={27}>Mon Oct 24  22:38:19</Cell>
      <Cell $w={93} $ml={132} $gap={5}>
        <Workspace $active />
        <Workspace />
      </Cell>
      <Cell $w={20} $ml={22}>
        <svg width="18" height="18" viewBox="0 0 18 18" fill="#7fbab6">
          <path d="M17 1L1 9L5 11L14 4L7.500 12V12.500L13 15Z" /><circle cx="4" cy="14.500" r="2" />
        </svg>
      </Cell>
      <Cell $w={20} $ml={20}>
        <svg width="18" height="18" viewBox="0 0 18 18">
          <rect x="1.500" y="2" width="15" height="11" rx="1" fill="#4b8fe0" stroke="#7fb2ee" />
          <rect x="8" y="13" width="2" height="2.500" fill="#cfd6dc" /><rect x="5.500" y="15" width="7" height="1.500" fill="#cfd6dc" />
          <circle cx="13.500" cy="5" r="1.600" fill="#ffd870" />
        </svg>
      </Cell>
      <Cell $w={20} $ml={21}>
        <svg width="16" height="18" viewBox="0 0 16 18">
          <path d="M2 4L8 2L12 8L10 13L5 15L2 14L7 11L6 7Z" fill="#444" /><circle cx="12" cy="14" r="3.200" fill="#12b4f0" />
        </svg>
      </Cell>
      <Cell $w={20} $ml={20}>
        <svg width="16" height="18" viewBox="0 0 16 18" fill="none" stroke="#fff" strokeWidth="1.800">
          <path d="M3 13H1.500V2H9.500" /><path d="M5.500 5.500H11L14.500 8.500V16H5.500V13.500M5.500 5.500V8M5 10.800H10.500M8.800 8.500L11 10.800L8.800 13" />
        </svg>
      </Cell>
      <Cell $w={20} $ml={24}>
        <svg width="19" height="20" viewBox="0 0 19 20" fill="none" stroke="#fff" strokeWidth="1.200">
          <path d="M14 17A8.500 8.500 0 1 1 17 14" /><path d="M9.500 8.500V14M9.500 5.500V7" strokeWidth="1.600" /><circle cx="16" cy="16.500" r="1.500" fill="#fff" />
        </svg>
      </Cell>
      <Cell $w={40} $ml={5} $size={17}>175</Cell>
      <Cell $w={80} $ml={14} $size={14.67} $dim>CPU  14%</Cell>
      <Cell $w={85} $ml={16} $size={14.5} $dim>MEM  65%</Cell>
      <Cell $w={85} $ml={12} $size={15} $dim>↓ 2.16 K/s</Cell>
      <Cell $w={85} $ml={11} $size={15} $dim>↑ 2.47 K/s</Cell>
      <Cell $w={20} $ml={15}>
        <svg width="15" height="18" viewBox="0 0 15 18" fill="none" stroke="#e8e8ee" strokeWidth="1.400">
          <rect x="0.700" y="2.500" width="13.500" height="14.500" rx="2" /><path d="M4 3.500V5H11V3.500L8.500 3V1H6.500V3Z" fill="#e8e8ee" strokeWidth="0.600" />
        </svg>
      </Cell>
      <Cell $w={30} $ml={29}>en</Cell>
      <Cell $w={18} $ml={25}>
        <svg width="15" height="14" viewBox="0 0 15 14" fill="none" stroke="#e8e8ee" strokeWidth="1.200">
          <path d="M5.500 1.500H13.800V9.500H4V7M9 9.500V12M5 12.500H13" /><rect x="1" y="1" width="3.500" height="3" /><path d="M2.700 4V11" />
        </svg>
      </Cell>
      <Cell $w={18} $ml={12}>
        <svg width="15" height="12" viewBox="0 0 15 12" fill="none" stroke="#e8e8ee" strokeWidth="1.200">
          <path d="M1 4H3L6 1.500V10.500L3 8H1Z" fill="#e8e8ee" /><path d="M8 4Q9.300 6 8 8M10 2.500Q12 6 10 9.500M12 1.200Q15 6 12 10.800" strokeOpacity="0.800" />
        </svg>
      </Cell>
      <Cell $w={18} $ml={13}>
        <svg width="13" height="14" viewBox="0 0 13 14" fill="none" stroke="#fff" strokeWidth="1.700">
          <path d="M4 3.300A4.600 4.600 0 1 0 9 3.300M6.500 1V7" />
        </svg>
      </Cell>
    </TopBar>
  );
}

function TraceToolbar() {
  return (
    <Toolbar $h={41} $pt={3}>
      <Grip $h={22} />
      <Tool $w={41}><Faint><rect x="1" y="2" width="16" height="15" /><path d="M1 4H17" strokeWidth="4" /><path d="M16 12V20M12 16H20" /></Faint></Tool>
      <Tool $w={16} $sep $start><Arrow /></Tool>
      <Tool $w={40}><Faint><path d="M1 17V4H7L9 6H18V17ZM1 10H18" /></Faint></Tool>
      <Tool $w={9} $start><Arrow /></Tool>
      <Tool $w={40}><Faint><path d="M10 17H1V2H12L16 6V9M4 2V7H11V2M4 17V11H10M12 18L13 14L18 9L20 11L15 17Z" /></Faint></Tool>
      <Tool $w={16} $sep $start><Arrow /></Tool>
      <Tool $w={41}><Faint><path d="M1 9V1H9M11 1H18V8M18 12V18H12" strokeDasharray="2 2" /><rect x="1" y="13" width="6" height="5" /><path d="M9 10L14 5M10 5H14V9" /></Faint></Tool>
      <Tool $w={32}><Faint><path d="M1 8V1H18V18H11" /><path d="M1 11V18H8" strokeDasharray="2 2" /><path d="M13 6L8 11M8 7V11H12" /></Faint></Tool>
      <Tool $w={42} $sep><Faint><path d="M1 5V1H5M14 1H18V5M18 14V18H14M5 18H1V14" /><rect x="5" y="4" width="9" height="11" /><path d="M9.500 0V2M9.500 17V19M0 9.500H3M16 9.500H19" /></Faint></Tool>
      <Tool $w={43} $sep>
        <svg width="26" height="22" viewBox="0 0 26 22" fill="#3465a4" stroke="#204a87">
          <path d="M0.500 1.500H9.500V20.500H8.500V8.500H4L0.500 5.500Z" /><path d="M25.500 1.500H16.500V20.500H17.500V8.500H21L25.500 5.500Z" />
        </svg>
      </Tool>
      <Tool $w={208}>logic-1-1</Tool>
      <Tool $w={9}><Arrow /></Tool>
      <Tool $w={42} $sep>
        <svg width="26" height="26" viewBox="0 0 26 26">
          <ellipse cx="13" cy="24" rx="9" ry="1.800" fill="#cfcfcf" />
          <path d="M2 23.500L12 11L14 13L3 24Z" fill="#a40000" stroke="#a40000" /><path d="M11 10L17 4.500L20 1L23.500 3L21 8L15.500 14.500Z" fill="#cc0000" stroke="#a40000" />
        </svg>
      </Tool>
      <Tool $w={46}>
        <svg width="26" height="18" viewBox="0 0 26 18">
          <path d="M0 9H26" stroke="#888" strokeWidth="1.500" />
          <path d="M3 9L5 3H7L9.500 9L7 15H5Z" fill="#edd400" stroke="#b39e00" /><path d="M10 9L13 2.500H20L23 9L20 15.500H13Z" fill="#73d216" stroke="#4e9a06" />
        </svg>
      </Tool>
    </Toolbar>
  );
}

export default function App() {
  return (
    <Desktop>
      <Global />
      <PanelBar />
      <Body>
        <Dock>
          {dockItems.map((d, i) => (
            <DockItem key={i}>
              {d.icon}
              {d.dot && <Dot />}
              {d.badge && <Badge>{d.badge}</Badge>}
            </DockItem>
          ))}
          <DockRule />
          <ActiveTile>
            <Wires />
            <Dot $bottom={2} />
          </ActiveTile>
          <DockItem $h={60}>
            <Archive />
            <Dot $bottom={6} />
          </DockItem>
          <Spring />
          <DockItem $h={68}>
            <svg width="24" height="20" viewBox="0 0 24 20" fill="#fff">
              {[0, 1, 2].map((r) => [0, 1, 2].map((c) => <rect key={`${r}${c}`} x={1 + c * 9} y={0.5 + r * 7.3} width="4.200" height="4.200" rx="1" />))}
            </svg>
          </DockItem>
        </Dock>
        <Window>
          <TitleBar>
            <span />
            <TitleText>logic-1-1 - PulseView</TitleText>
            <WinButtons>
              <svg width="72" height="20" viewBox="0 0 72 20">
                <rect x="6" y="9" width="6" height="2" fill="#aaa" />
                <path d="M37 5V9H41ZM35 15V11H31Z" fill="#b5b5b5" />
                <circle cx="65" cy="10" r="7.200" fill="#d9545c" /><path d="M62.300 7.300L67.700 12.700M67.700 7.300L62.300 12.700" stroke="#151b1d" strokeWidth="2" />
              </svg>
            </WinButtons>
          </TitleBar>
          <TabStrip>
            <StripCell $w={36} $pl={7} $sep>
              <svg width="19" height="20" viewBox="0 0 19 20" fill="none" stroke="#dadada" strokeWidth="1.200"><path d="M8 17H1V2H8L12 6V10M8 2V6H12" /><circle cx="13" cy="14.500" r="4" fill="#dadada" /><path d="M13 12V17M10.500 14.500H15.500" stroke="#f4f4f4" /></svg>
            </StripCell>
            <StripCell $w={105} $pl={12} $sep>
              <svg width="14" height="20" viewBox="0 0 14 20"><defs><radialGradient id="led" cx="0.400" cy="0.350"><stop offset="0" stopColor="#d8dad4" /><stop offset="1" stopColor="#888a85" /></radialGradient></defs><circle cx="7" cy="9" r="6.500" fill="url(#led)" stroke="#7d7f7a" /></svg>
              <StripLabel>Reload</StripLabel>
            </StripCell>
            <StripCell $w={35} $pl={12}>
              <svg width="17" height="17" viewBox="0 0 17 17"><circle cx="8.500" cy="8" r="4.600" fill="none" stroke="#6e6e6e" strokeWidth="4" /><circle cx="8.500" cy="8" r="6.900" fill="none" stroke="#6e6e6e" strokeWidth="1.600" strokeDasharray="3 2.420" /></svg>
            </StripCell>
            <Tab>
              <span>logic-1-1</span>
              <TabClose>
                <svg width="14" height="14" viewBox="0 0 14 14"><circle cx="7" cy="7" r="6.500" fill="#da4453" /><path d="M4.300 4.300L9.700 9.700M9.700 4.300L4.300 9.700" stroke="#fff" strokeWidth="1.200" /></svg>
              </TabClose>
            </Tab>
          </TabStrip>
          <Panes>
            <TracePane>
              <PaneTitle $pl={5}>
                <span>logic-1-1</span>
                <PaneButtons><FloatIcon /><CloseIcon /></PaneButtons>
              </PaneTitle>
              <TraceToolbar />
              <Ruler />
              <ViewRow>
                <ViewColumn>
                  <CanvasRow>
                    <ChannelHeader />
                    <TraceView />
                  </CanvasRow>
                  <HScroll>
                    <ScrollButton $side="left"><Arrow dir="left" /></ScrollButton>
                    <HThumb />
                    <Spring />
                    <ScrollButton $side="right"><Arrow dir="right" /></ScrollButton>
                  </HScroll>
                </ViewColumn>
                <VScroll>
                  <ScrollButton $side="top"><Arrow dir="up" /></ScrollButton>
                  <VThumb />
                  <Spring />
                  <ScrollButton $side="bottom"><Arrow /></ScrollButton>
                  <Corner />
                </VScroll>
              </ViewRow>
            </TracePane>
            <Splitter><Grip $h={18} /></Splitter>
            <SelectorPane>
              <PaneTitle $pl={4}>
                <span>Decoder Selector</span>
                <PaneButtons><FloatIcon /><CloseIcon /></PaneButtons>
              </PaneTitle>
              <Toolbar $h={17}><Grip $h={17} /></Toolbar>
              <SearchBox>
                <svg width="14" height="16" viewBox="0 0 14 16"><path d="M0 1.500Q0 0 1.500 0H8L13 5V14.500Q13 16 11.500 16H1.500Q0 16 0 14.500Z" fill="#3a8bd8" /><path d="M8 0V5H13Z" fill="#9cc8f0" /><circle cx="8" cy="10" r="2.600" fill="none" stroke="#bfe0fa" strokeWidth="1.200" /><path d="M9.800 12L12 14" stroke="#bfe0fa" strokeWidth="1.200" /></svg>
                <SearchText>SPI</SearchText>
                <svg width="18" height="15" viewBox="0 0 18 15" fill="none" stroke="#d6d6d6" strokeWidth="1.200"><path d="M0.800 7.500L6 1H17.300V14H6Z" /><path d="M8.500 5L13.500 10M13.500 5L8.500 10" strokeWidth="2" /></svg>
              </SearchBox>
              <Tree>
                <TreeHead>
                  <HeadCell $w={122}>Decoder<SortMark><Arrow size={10} /></SortMark></HeadCell>
                  <HeadCell>Name</HeadCell>
                </TreeHead>
                <TreeRow><Twisty><Arrow size={9} /></Twisty>All Decoders</TreeRow>
                {decoders.map(([id, name], i) => (
                  <TreeRow key={id} $selected={i === 3}>
                    <DecoderId>{id}</DecoderId>
                    {name}
                  </TreeRow>
                ))}
              </Tree>
              <DotRow />
              <Details>
                <Heading>SPI flash/EEPROM chips (spiflash)</Heading>
                <Summary>xx25 series SPI (NOR) flash/EEPROM chip protocol.</Summary>
                <DocBox>
                  {doc.map((p, i) => (
                    <Para key={i}>{p}</Para>
                  ))}
                </DocBox>
              </Details>
            </SelectorPane>
          </Panes>
        </Window>
      </Body>
    </Desktop>
  );
}
